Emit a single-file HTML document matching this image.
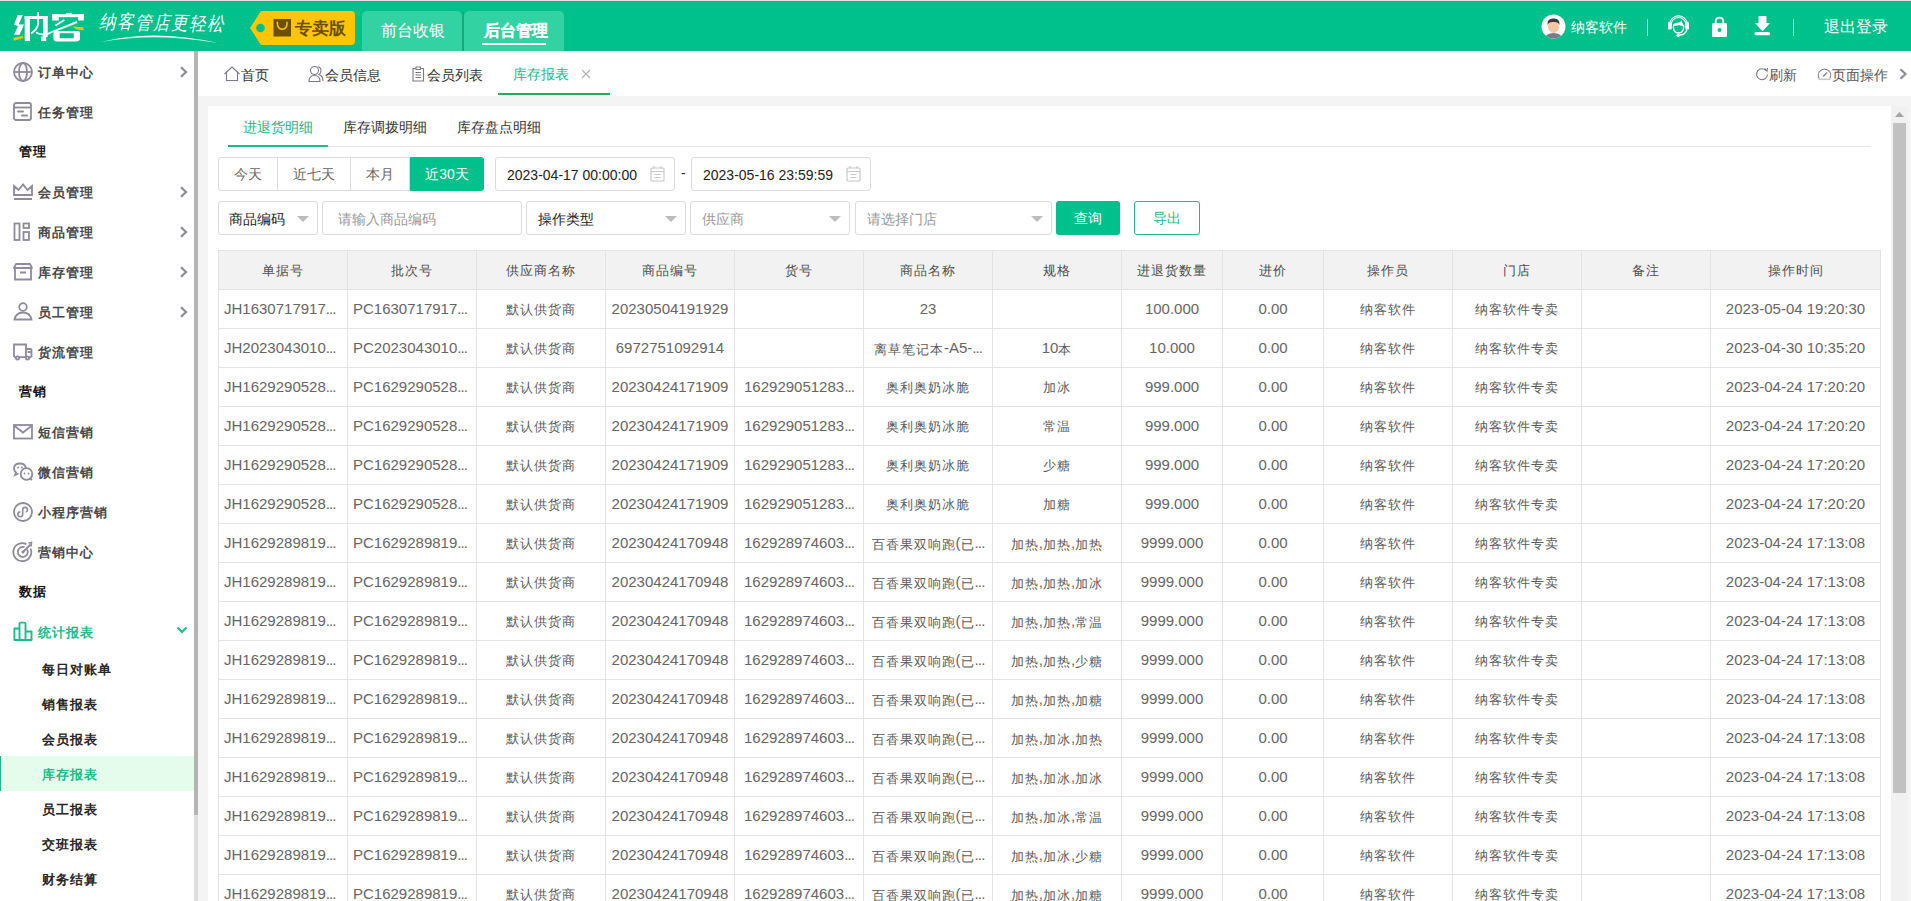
<!DOCTYPE html>
<html><head><meta charset="utf-8">
<style>
*{box-sizing:border-box;margin:0;padding:0}
html,body{width:1911px;height:901px;overflow:hidden;background:#f4f4f4;font-family:"Liberation Sans",sans-serif;font-size:14px;color:#333}
.abs{position:absolute}
#topline{position:absolute;left:0;top:0;width:1911px;height:1px;background:#e7dfe4}
#header{position:absolute;left:0;top:1px;width:1911px;height:50px;background:#00c18c}
.htab{position:absolute;top:10px;height:40px;background:#33d2a3;border-radius:5px 5px 0 0;color:#fff;font-size:16px;line-height:40px;text-align:center}
#side{position:absolute;left:0;top:51px;width:194px;height:850px;background:#fff;overflow:hidden}
.mi{position:absolute;left:0;width:194px;height:40px;font-weight:bold;color:#484848;font-size:13px;letter-spacing:1px}
.mi .t{position:absolute;left:38px;top:14px;line-height:16px}
.mi svg.ic{position:absolute;left:12px;top:10px}
.mi .arr{position:absolute;left:177px;top:15px}
.grp{position:absolute;left:19px;font-weight:bold;color:#111;font-size:13px;letter-spacing:1px;line-height:16px}
.sub{position:absolute;left:0;width:194px;height:35px;font-weight:bold;color:#262626;font-size:13px;letter-spacing:1px}
.sub .t{position:absolute;left:42px;top:11px;line-height:16px}
#sbtrack{position:absolute;left:194px;top:51px;width:4px;height:850px;background:#dedede}
#sbthumb{position:absolute;left:194px;top:51px;width:4px;height:764px;background:#b3b3b3}
#tabbar{position:absolute;left:198px;top:51px;width:1713px;height:45px;background:#fff}
.tb{position:absolute;top:16px;line-height:16px;color:#333;font-size:14px}
#card{position:absolute;left:208px;top:106px;width:1700px;height:795px;background:#fff;overflow:hidden}
#vtrack{position:absolute;left:1683px;top:0;width:17px;height:795px;background:#f1f1f1}
#vthumb{position:absolute;left:1685px;top:17px;width:13px;height:670px;background:#c1c1c1}
.btn{position:absolute;top:51px;height:34px;border:1px solid #dcdcdc;color:#666;text-align:center;line-height:32px;font-size:14px;background:#fff}
.inp{position:absolute;height:34px;border:1px solid #dcdcdc;border-radius:3px;background:#fff;font-size:14px;line-height:34px}
.tri{position:absolute;top:14px;width:0;height:0;border-left:6px solid transparent;border-right:6px solid transparent;border-top:6px solid #bdbdbd}
.thead{position:absolute;left:10px;width:1663px;height:39px;background:#f2f2f2}
.th{position:absolute;height:39px;line-height:41px;text-align:center;color:#4d4d4d;font-size:13px;letter-spacing:1px;text-indent:1px;white-space:nowrap;overflow:hidden}
.td{position:absolute;height:39px;line-height:41px;text-align:center;color:#5c5c5c;font-size:13px;letter-spacing:1px;text-indent:1px;white-space:nowrap;overflow:hidden}
.td.l{text-align:left;padding-left:6px;text-indent:0}
.n{font-size:15px;letter-spacing:0;color:#666;position:relative;top:-1px}
.dd{letter-spacing:-0.9px}
.vl{position:absolute;width:1px;background:#e3e3e3}
.hl{position:absolute;height:1px;background:#e3e3e3}
</style></head><body>
<div id="topline"></div>
<div id="header">
  <!-- logo -->
  <svg class="abs" style="left:0;top:-1px" width="100" height="50" viewBox="0 0 100 50">
    <g fill="#fff">
      <polygon points="17.6,15 22.8,15 18.8,24.2 24,24.5 19.6,34.7 14,34.7 18,26.3 14,24.8"/>
      <rect x="24.7" y="16" width="5.3" height="25.1"/>
      <rect x="24.7" y="16" width="23" height="3"/>
      <rect x="43" y="16" width="4.7" height="21"/>
      <rect x="41" y="36.5" width="5.2" height="4.6"/>
      <rect x="37.2" y="12" width="1.8" height="12"/>
      <path d="M38.5 23 Q37 30 31 33.5" stroke="#fff" stroke-width="1.8" fill="none"/>
      <rect x="66" y="13" width="5.6" height="3.2"/>
      <rect x="52.2" y="14.2" width="31.6" height="3"/>
      <rect x="52.2" y="14.2" width="6.6" height="6.3"/>
      <rect x="78.2" y="14.2" width="5.6" height="6.3"/>
      <path d="M55.5 25.5 L64.4 20" stroke="#fff" stroke-width="1.6" fill="none"/>
      <path d="M36 32.5 Q44 37 53 31.5 L77 22" stroke="#fff" stroke-width="1.9" fill="none"/>
      <path d="M53.5 33 Q53.5 31 56 31 L78 31 Q80 31 80 34 L80 38.5 Q80 41.5 76 41.5 L57 41.5 Q53.5 41.5 53.5 38.5 Z M59.7 33.3 L59.7 38.3 L73.8 38.3 L73.8 33.3 Z" fill-rule="evenodd"/>
    </g>
    <polygon fill="#ffc000" points="13.3,37.7 22.8,36.1 23.3,37.9 13.9,40.8"/>
    <polygon fill="#ffc000" points="72.1,26.6 83.2,27.2 83.8,30.2 76.6,29.4"/>
  </svg>
  <div class="abs" style="left:99px;top:10px;color:#fff;font-size:16.5px;letter-spacing:1px;font-style:italic;line-height:20px;transform:rotate(1.2deg) scaleY(1.15);transform-origin:0 50%">纳客管店更轻松</div>
  <svg class="abs" style="left:98px;top:32px" width="125" height="12" viewBox="0 0 125 12"><path d="M3 9 Q55 -4.5 120 10 Q55 -1.2 3 9 Z" fill="#fff" opacity="0.95"/></svg>
  <!-- badge -->
  <svg class="abs" style="left:249px;top:9px" width="107" height="36" viewBox="0 0 107 36">
    <path d="M12 1 L102 1 Q106 1 106 5 L106 31 Q106 35 102 35 L12 35 L1 18 Z" fill="#ffc500"/>
    <circle cx="11.5" cy="18" r="4.3" fill="#00c18c"/>
    <rect x="24.5" y="9" width="17.5" height="17.5" fill="#6b5000"/>
    <path d="M28.3 12.3 Q28.3 19.3 33.2 19.3 Q38.1 19.3 38.1 12.3" stroke="#ffc500" stroke-width="1.5" fill="none" stroke-linecap="round"/>
  </svg>
  <div class="abs" style="left:295px;top:18px;font-size:17px;font-weight:bold;color:#6b5000;line-height:20px;letter-spacing:0px">专卖版</div>
  <div class="htab" style="left:362px;width:100px;padding-left:2px">前台收银</div>
  <div class="abs" style="left:462px;top:11px;width:2px;height:40px;background:#17a97c"></div>
  <div class="htab" style="left:464px;width:100px;font-weight:bold;padding-left:3px;-webkit-text-stroke:0.15px #fff">后台管理</div>
  <div class="abs" style="left:482px;top:42px;width:64px;height:2px;background:#fff"></div>
  <!-- right -->
  <svg class="abs" style="left:1541px;top:13px" width="25" height="25" viewBox="0 0 25 25">
    <defs><clipPath id="cc"><circle cx="12.5" cy="12.5" r="12"/></clipPath></defs>
    <circle cx="12.5" cy="12.5" r="12" fill="#fff"/>
    <g clip-path="url(#cc)">
      <ellipse cx="12.5" cy="25.5" rx="9.5" ry="6.5" fill="#7a7a8a"/>
      <ellipse cx="12.5" cy="12.5" rx="5.5" ry="6.5" fill="#f4c7a1"/>
      <path d="M6.5 11 Q6 4 12.5 4.5 Q19 4 18.5 11 Q17 7.5 12.5 8 Q8 7.5 6.5 11Z" fill="#3b3b3b"/>
    </g>
  </svg>
  <div class="abs" style="left:1571px;top:18px;color:#fff;font-size:14px;line-height:16px">纳客软件</div>
  <div class="abs" style="left:1647px;top:18px;width:1px;height:17px;background:#b9ecd9"></div>
  <svg class="abs" style="left:1667px;top:12px" width="23" height="24" viewBox="0 0 23 24">
    <path d="M3.2 12 A8.3 8.3 0 0 1 19.8 12" stroke="#fff" stroke-width="2.8" fill="none"/>
    <path d="M3.2 12 A8.3 8.3 0 0 1 19.8 12" stroke="#00c18c" stroke-width="0.7" fill="none"/>
    <rect x="1" y="9" width="3.8" height="7.5" rx="1" fill="#fff"/>
    <rect x="18.2" y="9" width="3.8" height="7.5" rx="1" fill="#fff"/>
    <path d="M6.3 13.5 Q6.5 20 11.5 20 Q16.5 20 16.7 13.5" stroke="#fff" stroke-width="1.3" fill="none"/>
    <path d="M5.8 13.5 Q6 9.5 11 9.8 Q13 9.8 14.5 7.5 Q15 10.5 17.2 12.5 L17.2 14 Q14 11.8 11.5 12.3 Q8.5 12.5 5.8 14Z" fill="#fff"/>
    <path d="M20 15.5 Q19.5 21.5 12 22.3" stroke="#fff" stroke-width="1.4" fill="none"/>
    <circle cx="11.2" cy="22.3" r="1.7" fill="#fff"/>
  </svg>
  <svg class="abs" style="left:1711px;top:14px" width="17" height="23" viewBox="0 0 17 23">
    <path d="M4.7 9 V6.8 Q4.7 2.6 8.5 2.6 Q12.3 2.6 12.3 6.8 V9" stroke="#fff" stroke-width="1.9" fill="none"/>
    <rect x="1" y="8" width="15" height="14" rx="1.5" fill="#fff"/>
    <circle cx="8.5" cy="15" r="2" fill="#00c18c"/>
  </svg>
  <svg class="abs" style="left:1754px;top:14px" width="17" height="22" viewBox="0 0 17 22">
    <rect x="4.5" y="1" width="8" height="8" rx="1" fill="#fff"/>
    <path d="M1 8 H16 L8.5 16.5 Z" fill="#fff"/>
    <rect x="0.5" y="17" width="15.5" height="3.2" rx="1.5" fill="#fff"/>
  </svg>
  <div class="abs" style="left:1793px;top:18px;width:1px;height:17px;background:#b9ecd9"></div>
  <div class="abs" style="left:1824px;top:17px;color:#fff;font-size:16px;line-height:18px">退出登录</div>
</div>

<div id="side">
<div class="mi" style="top:0px"><span class="t">订单中心</span><svg class="ic" style="left:12px;top:10px" width="22" height="22" viewBox="0 0 22 22" ><circle cx="11" cy="11" r="9" stroke="#8f8b9b" stroke-width="1.8" fill="none"/><ellipse cx="11" cy="11" rx="4" ry="9" stroke="#8f8b9b" stroke-width="1.8" fill="none"/><path d="M2 11 H20" stroke="#8f8b9b" stroke-width="1.8" fill="none"/></svg><svg class="arr" style="left:179px;top:15px" width="10" height="12" viewBox="0 0 10 12"><path d="M2 1.2 L7 6 L2 10.8" stroke="#8f8b9b" stroke-width="2.2" fill="none"/></svg></div>
<div class="mi" style="top:40px"><span class="t">任务管理</span><svg class="ic" style="left:12px;top:10px" width="22" height="22" viewBox="0 0 22 22" ><rect x="2" y="2" width="17" height="17" rx="2" stroke="#8f8b9b" stroke-width="1.8" fill="none"/><path d="M2 6.5 H19" stroke="#8f8b9b" stroke-width="1.8" fill="none"/><path d="M6 10.5 H11" stroke="#8f8b9b" stroke-width="2" stroke-linecap="round"/><path d="M10 14.5 H15" stroke="#8f8b9b" stroke-width="2" stroke-linecap="round"/></svg></div>
<div class="grp" style="top:93px">管理</div>
<div class="mi" style="top:120px"><span class="t">会员管理</span><svg class="ic" style="left:12px;top:10px" width="22" height="22" viewBox="0 0 22 22" ><path d="M2 14 V5 L6.5 9 L11 3.5 L15.5 9 L20 5 V14 Z" stroke="#8f8b9b" stroke-width="1.8" fill="none" stroke-linejoin="miter"/><path d="M2 18 H20" stroke="#8f8b9b" stroke-width="2"/></svg><svg class="arr" style="left:179px;top:15px" width="10" height="12" viewBox="0 0 10 12"><path d="M2 1.2 L7 6 L2 10.8" stroke="#8f8b9b" stroke-width="2.2" fill="none"/></svg></div>
<div class="mi" style="top:160px"><span class="t">商品管理</span><svg class="ic" style="left:12px;top:10px" width="22" height="22" viewBox="0 0 22 22" ><rect x="2.5" y="2.5" width="5" height="16.5" stroke="#8f8b9b" stroke-width="1.8" fill="none"/><rect x="11.5" y="2.5" width="5.5" height="4.5" stroke="#8f8b9b" stroke-width="1.8" fill="none"/><rect x="11.5" y="11" width="5.5" height="8" stroke="#8f8b9b" stroke-width="1.8" fill="none"/></svg><svg class="arr" style="left:179px;top:15px" width="10" height="12" viewBox="0 0 10 12"><path d="M2 1.2 L7 6 L2 10.8" stroke="#8f8b9b" stroke-width="2.2" fill="none"/></svg></div>
<div class="mi" style="top:200px"><span class="t">库存管理</span><svg class="ic" style="left:12px;top:10px" width="22" height="22" viewBox="0 0 22 22" ><path d="M4 3 H18 L20 7 H2 Z" stroke="#8f8b9b" stroke-width="1.8" fill="none" stroke-linejoin="round"/><path d="M3 7 V18.5 H19 V7" stroke="#8f8b9b" stroke-width="1.8" fill="none"/><path d="M8 11.5 H14" stroke="#8f8b9b" stroke-width="2"/></svg><svg class="arr" style="left:179px;top:15px" width="10" height="12" viewBox="0 0 10 12"><path d="M2 1.2 L7 6 L2 10.8" stroke="#8f8b9b" stroke-width="2.2" fill="none"/></svg></div>
<div class="mi" style="top:240px"><span class="t">员工管理</span><svg class="ic" style="left:12px;top:10px" width="22" height="22" viewBox="0 0 22 22" ><circle cx="11" cy="6" r="3.8" stroke="#8f8b9b" stroke-width="1.8" fill="none"/><path d="M2.5 18.5 Q4 11.5 11 11.5 Q18 11.5 19.5 18.5 Z" stroke="#8f8b9b" stroke-width="1.8" fill="none"/></svg><svg class="arr" style="left:179px;top:15px" width="10" height="12" viewBox="0 0 10 12"><path d="M2 1.2 L7 6 L2 10.8" stroke="#8f8b9b" stroke-width="2.2" fill="none"/></svg></div>
<div class="mi" style="top:280px"><span class="t">货流管理</span><svg class="ic" style="left:12px;top:10px" width="22" height="22" viewBox="0 0 22 22" ><path d="M2 16 V3.5 H14 V16" stroke="#8f8b9b" stroke-width="1.8" fill="none"/><path d="M14 8 H18.5 Q19.5 8 19.5 9 V16" stroke="#8f8b9b" stroke-width="1.8" fill="none"/><path d="M2 16.2 H19.5" stroke="#8f8b9b" stroke-width="1.8" fill="none"/><circle cx="5.5" cy="17" r="1.6" fill="#fff" stroke="#8f8b9b" stroke-width="1.8" fill="none"/><circle cx="15.5" cy="17" r="1.6" fill="#fff" stroke="#8f8b9b" stroke-width="1.8" fill="none"/><path d="M15.5 11 H19" stroke="#8f8b9b" stroke-width="1.8" fill="none"/></svg></div>
<div class="grp" style="top:333px">营销</div>
<div class="mi" style="top:360px"><span class="t">短信营销</span><svg class="ic" style="left:12px;top:10px" width="22" height="22" viewBox="0 0 22 22" ><rect x="2" y="4" width="18" height="13.5" stroke="#8f8b9b" stroke-width="1.8" fill="none"/><path d="M2 4.5 L11 11.5 L20 4.5" stroke="#8f8b9b" stroke-width="1.8" fill="none"/></svg></div>
<div class="mi" style="top:400px"><span class="t">微信营销</span><svg class="ic" style="left:12px;top:10px" width="22" height="22" viewBox="0 0 22 22" ><path d="M14 7 Q13 2.5 8 2.5 Q2 2.5 2 7.5 Q2 10 4 11.5 L3 14 L6.5 12.5" stroke="#8f8b9b" stroke-width="1.8" fill="none"/><circle cx="14.5" cy="13" r="5.8" stroke="#8f8b9b" stroke-width="1.8" fill="none"/><path d="M18 17.5 L20 19" stroke="#8f8b9b" stroke-width="1.8" fill="none"/><circle cx="12.5" cy="12.5" r="0.9" fill="#8f8b9b"/><circle cx="16.5" cy="12.5" r="0.9" fill="#8f8b9b"/><circle cx="6" cy="6.5" r="0.9" fill="#8f8b9b"/><circle cx="10" cy="6.5" r="0.9" fill="#8f8b9b"/></svg></div>
<div class="mi" style="top:440px"><span class="t">小程序营销</span><svg class="ic" style="left:12px;top:10px" width="22" height="22" viewBox="0 0 22 22" ><circle cx="11" cy="11" r="9" stroke="#8f8b9b" stroke-width="1.8" fill="none"/><path d="M8.3 10.9 A2.4 2.4 0 1 0 10.7 13.3 L10.7 8.7 A2.4 2.4 0 1 1 13.7 11.1" stroke="#8f8b9b" stroke-width="1.6" fill="none"/></svg></div>
<div class="mi" style="top:480px"><span class="t">营销中心</span><svg class="ic" style="left:12px;top:10px" width="22" height="22" viewBox="0 0 22 22" ><path d="M18.5 7.5 A9 9 0 1 1 14.5 3.2" stroke="#8f8b9b" stroke-width="1.8" fill="none"/><path d="M15.2 8.5 A5 5 0 1 1 12.5 6.2" stroke="#8f8b9b" stroke-width="1.8" fill="none"/><circle cx="11" cy="11" r="1.5" fill="#8f8b9b"/><path d="M11 11 L18.5 3.5" stroke="#8f8b9b" stroke-width="1.8" fill="none"/><path d="M16.5 2 L19.5 1.5 L19 5.5" stroke="#8f8b9b" stroke-width="1.6" fill="none"/></svg></div>
<div class="grp" style="top:533px">数据</div>
<div class="mi" style="top:560px"><span class="t" style="color:#19bd8a">统计报表</span><svg class="ic" style="left:12px;top:10px" width="22" height="22" viewBox="0 0 22 22" ><path d="M2.4 19 V7.5 H7.5 V19 Z M7.5 19 V2.8 Q7.5 1.6 8.7 1.6 H12.3 Q13.5 1.6 13.5 2.8 V19 Z M13.5 19 V10.5 H19.5 V19 Z" stroke="#19bd8a" stroke-width="1.9" fill="none" stroke-linejoin="round"/></svg><svg class="arr" style="left:176px;top:14px" width="12" height="10" viewBox="0 0 12 10"><path d="M1.5 2.5 L6 7 L10.5 2.5" stroke="#19bd8a" stroke-width="2.2" fill="none"/></svg></div>
<div class="sub" style="top:600px"><span class="t">每日对账单</span></div>
<div class="sub" style="top:635px"><span class="t">销售报表</span></div>
<div class="sub" style="top:670px"><span class="t">会员报表</span></div>
<div class="sub" style="top:705px;background:#e5fcec"><div class="abs" style="left:0;top:0;width:1px;height:35px;background:#19bd8a"></div><span class="t" style="color:#19bd8a">库存报表</span></div>
<div class="sub" style="top:740px"><span class="t">员工报表</span></div>
<div class="sub" style="top:775px"><span class="t">交班报表</span></div>
<div class="sub" style="top:810px"><span class="t">财务结算</span></div>
</div>
<div id="sbtrack"></div><div id="sbthumb"></div>

<div id="tabbar">
<div class="abs" style="left:0;top:1px;width:1713px;height:1px;background:#f5f2f3"></div>

<svg class="abs" style="left:25px;top:15px" width="18" height="16" viewBox="0 0 18 16"><path d="M1.5 8 L9 1 L16.5 8 M3.5 6.5 V14.5 H14.5 V6.5" stroke="#7d7a88" stroke-width="1.1" fill="none"/></svg>
<div class="tb" style="left:43px">首页</div>
<svg class="abs" style="left:110px;top:14px" width="18" height="18" viewBox="0 0 18 18"><circle cx="6.5" cy="5.5" r="4" stroke="#7d7a88" stroke-width="1.1" fill="none"/><path d="M1 16.5 Q1 10.5 6.5 10.5 Q12 10.5 12 16.5 Z" stroke="#7d7a88" stroke-width="1.1" fill="none"/><path d="M9.5 1.8 Q13 2.2 13 5.5 Q13 8 11 9.5 Q15 11 15 16" stroke="#7d7a88" stroke-width="1.1" fill="none"/></svg>
<div class="tb" style="left:127px">会员信息</div>
<svg class="abs" style="left:213px;top:15px" width="15" height="16" viewBox="0 0 15 16"><path d="M2 2.5 H12.5 V15 H2 Z" stroke="#7d7a88" stroke-width="1.1" fill="none"/><rect x="5" y="1" width="4.5" height="2.5" fill="#fff" stroke="#7d7a88" stroke-width="1"/><path d="M4.5 6.5 H10 M4.5 9 H10 M4.5 11.5 H10" stroke="#7d7a88" stroke-width="1"/></svg>
<div class="tb" style="left:229px">会员列表</div>
<div class="tb" style="left:315px;top:15px;color:#1ab98a">库存报表</div>
<svg class="abs" style="left:383px;top:18px" width="10" height="10" viewBox="0 0 10 10"><path d="M1 1 L9 9 M9 1 L1 9" stroke="#b3b3b3" stroke-width="1.1"/></svg>
<div class="abs" style="left:300px;top:42px;width:112px;height:2px;background:#22ad65"></div>
<svg class="abs" style="left:1557px;top:16px" width="14" height="14" viewBox="0 0 14 14"><path d="M11.5 4 A5.5 5.5 0 1 0 12.5 7.5" stroke="#7d7a88" stroke-width="1.1" fill="none"/><path d="M9.5 1.5 L12 4 L12.5 0.8" stroke="#7d7a88" stroke-width="1.1" fill="none"/></svg>
<div class="tb" style="left:1571px;color:#555">刷新</div>
<svg class="abs" style="left:1619px;top:16px" width="15" height="14" viewBox="0 0 15 14"><path d="M2.2 11.5 A6.2 6.2 0 1 1 12.8 11.5" stroke="#7d7a88" stroke-width="1.1" fill="none"/><path d="M6.2 9.5 L10 5.5" stroke="#7d7a88" stroke-width="1.1"/><path d="M1.5 12.3 H13.5" stroke="#c8c8c8" stroke-width="1.6"/></svg>
<div class="tb" style="left:1634px;color:#555">页面操作</div>
<svg class="abs" style="left:1701px;top:17px" width="10" height="12" viewBox="0 0 10 12"><path d="M1.5 1.2 L6.5 6 L1.5 10.8" stroke="#8f8b9b" stroke-width="2.2" fill="none"/></svg>

</div>

<div id="card">

<div class="abs" style="left:35px;top:13px;color:#1ab98a;line-height:16px">进退货明细</div>
<div class="abs" style="left:135px;top:13px;color:#333;line-height:16px">库存调拨明细</div>
<div class="abs" style="left:249px;top:13px;color:#333;line-height:16px">库存盘点明细</div>
<div class="abs" style="left:20px;top:40px;width:1643px;height:1px;background:#e4e4e4"></div>
<div class="abs" style="left:20px;top:39px;width:100px;height:2px;background:#19bd8a"></div>

<div class="btn" style="left:10px;width:60px;border-radius:3px 0 0 3px">今天</div>
<div class="btn" style="left:69px;width:74px">近七天</div>
<div class="btn" style="left:142px;width:60px">本月</div>
<div class="btn" style="left:202px;width:74px;background:#00c18c;border-color:#00c18c;color:#fff;border-radius:0 3px 3px 0">近30天</div>

<div class="inp" style="left:287px;top:51px;width:180px;color:#222;padding-left:11px">2023-04-17 00:00:00<svg class="abs" style="left:154px;top:7px" width="15" height="17" viewBox="0 0 15 17"><rect x="1" y="3" width="13" height="13" rx="1" stroke="#c8c8c8" stroke-width="1.2" fill="none"/><path d="M1 6.5 H14 M4 1 V3.5 M11 1 V3.5 M4.5 9.5 H10.5 M4.5 12.5 H10.5" stroke="#c8c8c8" stroke-width="1.2"/></svg></div>
<div class="abs" style="left:473px;top:59px;color:#333;line-height:16px">-</div>
<div class="inp" style="left:483px;top:51px;width:180px;color:#222;padding-left:11px">2023-05-16 23:59:59<svg class="abs" style="left:154px;top:7px" width="15" height="17" viewBox="0 0 15 17"><rect x="1" y="3" width="13" height="13" rx="1" stroke="#c8c8c8" stroke-width="1.2" fill="none"/><path d="M1 6.5 H14 M4 1 V3.5 M11 1 V3.5 M4.5 9.5 H10.5 M4.5 12.5 H10.5" stroke="#c8c8c8" stroke-width="1.2"/></svg></div>

<div class="inp" style="left:10px;top:95px;width:100px;color:#222;padding-left:10px">商品编码<div class="tri" style="left:78px"></div></div>
<div class="inp" style="left:114px;top:95px;width:200px;color:#999;padding-left:15px">请输入商品编码</div>
<div class="inp" style="left:318px;top:95px;width:160px;color:#222;padding-left:11px">操作类型<div class="tri" style="left:138px"></div></div>
<div class="inp" style="left:482px;top:95px;width:160px;color:#999;padding-left:11px">供应商<div class="tri" style="left:138px"></div></div>
<div class="inp" style="left:647px;top:95px;width:197px;color:#999;padding-left:11px">请选择门店<div class="tri" style="left:175px"></div></div>
<div class="abs" style="left:848px;top:95px;width:64px;height:34px;background:#00c18c;border-radius:3px;color:#fff;text-align:center;line-height:34px">查询</div>
<div class="abs" style="left:926px;top:95px;width:66px;height:34px;border:1px solid #19bd8a;border-radius:3px;color:#19bd8a;text-align:center;line-height:32px">导出</div>

<div class="thead" style="top:144px"></div>
<div class="th" style="left:10px;width:129px;top:144px">单据号</div>
<div class="th" style="left:139px;width:129px;top:144px">批次号</div>
<div class="th" style="left:268px;width:129px;top:144px">供应商名称</div>
<div class="th" style="left:397px;width:129px;top:144px">商品编号</div>
<div class="th" style="left:526px;width:129px;top:144px">货号</div>
<div class="th" style="left:655px;width:129px;top:144px">商品名称</div>
<div class="th" style="left:784px;width:129px;top:144px">规格</div>
<div class="th" style="left:913px;width:101px;top:144px">进退货数量</div>
<div class="th" style="left:1014px;width:101px;top:144px">进价</div>
<div class="th" style="left:1115px;width:129px;top:144px">操作员</div>
<div class="th" style="left:1244px;width:129px;top:144px">门店</div>
<div class="th" style="left:1373px;width:129px;top:144px">备注</div>
<div class="th" style="left:1502px;width:170px;top:144px">操作时间</div>
<div class="td l" style="left:10px;width:129px;top:183px"><span class="n">JH1630717917<span class="dd">...</span></span></div>
<div class="td l" style="left:139px;width:129px;top:183px"><span class="n">PC1630717917<span class="dd">...</span></span></div>
<div class="td" style="left:268px;width:129px;top:183px">默认供货商</div>
<div class="td" style="left:397px;width:129px;top:183px"><span class="n">20230504191929</span></div>
<div class="td" style="left:526px;width:129px;top:183px"></div>
<div class="td" style="left:655px;width:129px;top:183px"><span class="n">23</span></div>
<div class="td" style="left:784px;width:129px;top:183px"></div>
<div class="td" style="left:913px;width:101px;top:183px"><span class="n">100.000</span></div>
<div class="td" style="left:1014px;width:101px;top:183px"><span class="n">0.00</span></div>
<div class="td" style="left:1115px;width:129px;top:183px">纳客软件</div>
<div class="td" style="left:1244px;width:129px;top:183px">纳客软件专卖</div>
<div class="td" style="left:1373px;width:129px;top:183px"></div>
<div class="td" style="left:1502px;width:170px;top:183px"><span class="n">2023-05-04 19:20:30</span></div>
<div class="td l" style="left:10px;width:129px;top:222px"><span class="n">JH2023043010<span class="dd">...</span></span></div>
<div class="td l" style="left:139px;width:129px;top:222px"><span class="n">PC2023043010<span class="dd">...</span></span></div>
<div class="td" style="left:268px;width:129px;top:222px">默认供货商</div>
<div class="td" style="left:397px;width:129px;top:222px"><span class="n">6972751092914</span></div>
<div class="td" style="left:526px;width:129px;top:222px"></div>
<div class="td" style="left:655px;width:129px;top:222px">离草笔记本<span class="n">-A5-<span class="dd">...</span></span></div>
<div class="td" style="left:784px;width:129px;top:222px"><span class="n">10</span>本</div>
<div class="td" style="left:913px;width:101px;top:222px"><span class="n">10.000</span></div>
<div class="td" style="left:1014px;width:101px;top:222px"><span class="n">0.00</span></div>
<div class="td" style="left:1115px;width:129px;top:222px">纳客软件</div>
<div class="td" style="left:1244px;width:129px;top:222px">纳客软件专卖</div>
<div class="td" style="left:1373px;width:129px;top:222px"></div>
<div class="td" style="left:1502px;width:170px;top:222px"><span class="n">2023-04-30 10:35:20</span></div>
<div class="td l" style="left:10px;width:129px;top:261px"><span class="n">JH1629290528<span class="dd">...</span></span></div>
<div class="td l" style="left:139px;width:129px;top:261px"><span class="n">PC1629290528<span class="dd">...</span></span></div>
<div class="td" style="left:268px;width:129px;top:261px">默认供货商</div>
<div class="td" style="left:397px;width:129px;top:261px"><span class="n">20230424171909</span></div>
<div class="td" style="left:526px;width:129px;top:261px"><span class="n">162929051283<span class="dd">...</span></span></div>
<div class="td" style="left:655px;width:129px;top:261px">奥利奥奶冰脆</div>
<div class="td" style="left:784px;width:129px;top:261px">加冰</div>
<div class="td" style="left:913px;width:101px;top:261px"><span class="n">999.000</span></div>
<div class="td" style="left:1014px;width:101px;top:261px"><span class="n">0.00</span></div>
<div class="td" style="left:1115px;width:129px;top:261px">纳客软件</div>
<div class="td" style="left:1244px;width:129px;top:261px">纳客软件专卖</div>
<div class="td" style="left:1373px;width:129px;top:261px"></div>
<div class="td" style="left:1502px;width:170px;top:261px"><span class="n">2023-04-24 17:20:20</span></div>
<div class="td l" style="left:10px;width:129px;top:300px"><span class="n">JH1629290528<span class="dd">...</span></span></div>
<div class="td l" style="left:139px;width:129px;top:300px"><span class="n">PC1629290528<span class="dd">...</span></span></div>
<div class="td" style="left:268px;width:129px;top:300px">默认供货商</div>
<div class="td" style="left:397px;width:129px;top:300px"><span class="n">20230424171909</span></div>
<div class="td" style="left:526px;width:129px;top:300px"><span class="n">162929051283<span class="dd">...</span></span></div>
<div class="td" style="left:655px;width:129px;top:300px">奥利奥奶冰脆</div>
<div class="td" style="left:784px;width:129px;top:300px">常温</div>
<div class="td" style="left:913px;width:101px;top:300px"><span class="n">999.000</span></div>
<div class="td" style="left:1014px;width:101px;top:300px"><span class="n">0.00</span></div>
<div class="td" style="left:1115px;width:129px;top:300px">纳客软件</div>
<div class="td" style="left:1244px;width:129px;top:300px">纳客软件专卖</div>
<div class="td" style="left:1373px;width:129px;top:300px"></div>
<div class="td" style="left:1502px;width:170px;top:300px"><span class="n">2023-04-24 17:20:20</span></div>
<div class="td l" style="left:10px;width:129px;top:339px"><span class="n">JH1629290528<span class="dd">...</span></span></div>
<div class="td l" style="left:139px;width:129px;top:339px"><span class="n">PC1629290528<span class="dd">...</span></span></div>
<div class="td" style="left:268px;width:129px;top:339px">默认供货商</div>
<div class="td" style="left:397px;width:129px;top:339px"><span class="n">20230424171909</span></div>
<div class="td" style="left:526px;width:129px;top:339px"><span class="n">162929051283<span class="dd">...</span></span></div>
<div class="td" style="left:655px;width:129px;top:339px">奥利奥奶冰脆</div>
<div class="td" style="left:784px;width:129px;top:339px">少糖</div>
<div class="td" style="left:913px;width:101px;top:339px"><span class="n">999.000</span></div>
<div class="td" style="left:1014px;width:101px;top:339px"><span class="n">0.00</span></div>
<div class="td" style="left:1115px;width:129px;top:339px">纳客软件</div>
<div class="td" style="left:1244px;width:129px;top:339px">纳客软件专卖</div>
<div class="td" style="left:1373px;width:129px;top:339px"></div>
<div class="td" style="left:1502px;width:170px;top:339px"><span class="n">2023-04-24 17:20:20</span></div>
<div class="td l" style="left:10px;width:129px;top:378px"><span class="n">JH1629290528<span class="dd">...</span></span></div>
<div class="td l" style="left:139px;width:129px;top:378px"><span class="n">PC1629290528<span class="dd">...</span></span></div>
<div class="td" style="left:268px;width:129px;top:378px">默认供货商</div>
<div class="td" style="left:397px;width:129px;top:378px"><span class="n">20230424171909</span></div>
<div class="td" style="left:526px;width:129px;top:378px"><span class="n">162929051283<span class="dd">...</span></span></div>
<div class="td" style="left:655px;width:129px;top:378px">奥利奥奶冰脆</div>
<div class="td" style="left:784px;width:129px;top:378px">加糖</div>
<div class="td" style="left:913px;width:101px;top:378px"><span class="n">999.000</span></div>
<div class="td" style="left:1014px;width:101px;top:378px"><span class="n">0.00</span></div>
<div class="td" style="left:1115px;width:129px;top:378px">纳客软件</div>
<div class="td" style="left:1244px;width:129px;top:378px">纳客软件专卖</div>
<div class="td" style="left:1373px;width:129px;top:378px"></div>
<div class="td" style="left:1502px;width:170px;top:378px"><span class="n">2023-04-24 17:20:20</span></div>
<div class="td l" style="left:10px;width:129px;top:417px"><span class="n">JH1629289819<span class="dd">...</span></span></div>
<div class="td l" style="left:139px;width:129px;top:417px"><span class="n">PC1629289819<span class="dd">...</span></span></div>
<div class="td" style="left:268px;width:129px;top:417px">默认供货商</div>
<div class="td" style="left:397px;width:129px;top:417px"><span class="n">20230424170948</span></div>
<div class="td" style="left:526px;width:129px;top:417px"><span class="n">162928974603<span class="dd">...</span></span></div>
<div class="td" style="left:655px;width:129px;top:417px">百香果双响跑<span class="n">(</span>已<span class="n"><span class="dd">...</span></span></div>
<div class="td" style="left:784px;width:129px;top:417px">加热<span class="n">,</span>加热<span class="n">,</span>加热</div>
<div class="td" style="left:913px;width:101px;top:417px"><span class="n">9999.000</span></div>
<div class="td" style="left:1014px;width:101px;top:417px"><span class="n">0.00</span></div>
<div class="td" style="left:1115px;width:129px;top:417px">纳客软件</div>
<div class="td" style="left:1244px;width:129px;top:417px">纳客软件专卖</div>
<div class="td" style="left:1373px;width:129px;top:417px"></div>
<div class="td" style="left:1502px;width:170px;top:417px"><span class="n">2023-04-24 17:13:08</span></div>
<div class="td l" style="left:10px;width:129px;top:456px"><span class="n">JH1629289819<span class="dd">...</span></span></div>
<div class="td l" style="left:139px;width:129px;top:456px"><span class="n">PC1629289819<span class="dd">...</span></span></div>
<div class="td" style="left:268px;width:129px;top:456px">默认供货商</div>
<div class="td" style="left:397px;width:129px;top:456px"><span class="n">20230424170948</span></div>
<div class="td" style="left:526px;width:129px;top:456px"><span class="n">162928974603<span class="dd">...</span></span></div>
<div class="td" style="left:655px;width:129px;top:456px">百香果双响跑<span class="n">(</span>已<span class="n"><span class="dd">...</span></span></div>
<div class="td" style="left:784px;width:129px;top:456px">加热<span class="n">,</span>加热<span class="n">,</span>加冰</div>
<div class="td" style="left:913px;width:101px;top:456px"><span class="n">9999.000</span></div>
<div class="td" style="left:1014px;width:101px;top:456px"><span class="n">0.00</span></div>
<div class="td" style="left:1115px;width:129px;top:456px">纳客软件</div>
<div class="td" style="left:1244px;width:129px;top:456px">纳客软件专卖</div>
<div class="td" style="left:1373px;width:129px;top:456px"></div>
<div class="td" style="left:1502px;width:170px;top:456px"><span class="n">2023-04-24 17:13:08</span></div>
<div class="td l" style="left:10px;width:129px;top:495px"><span class="n">JH1629289819<span class="dd">...</span></span></div>
<div class="td l" style="left:139px;width:129px;top:495px"><span class="n">PC1629289819<span class="dd">...</span></span></div>
<div class="td" style="left:268px;width:129px;top:495px">默认供货商</div>
<div class="td" style="left:397px;width:129px;top:495px"><span class="n">20230424170948</span></div>
<div class="td" style="left:526px;width:129px;top:495px"><span class="n">162928974603<span class="dd">...</span></span></div>
<div class="td" style="left:655px;width:129px;top:495px">百香果双响跑<span class="n">(</span>已<span class="n"><span class="dd">...</span></span></div>
<div class="td" style="left:784px;width:129px;top:495px">加热<span class="n">,</span>加热<span class="n">,</span>常温</div>
<div class="td" style="left:913px;width:101px;top:495px"><span class="n">9999.000</span></div>
<div class="td" style="left:1014px;width:101px;top:495px"><span class="n">0.00</span></div>
<div class="td" style="left:1115px;width:129px;top:495px">纳客软件</div>
<div class="td" style="left:1244px;width:129px;top:495px">纳客软件专卖</div>
<div class="td" style="left:1373px;width:129px;top:495px"></div>
<div class="td" style="left:1502px;width:170px;top:495px"><span class="n">2023-04-24 17:13:08</span></div>
<div class="td l" style="left:10px;width:129px;top:534px"><span class="n">JH1629289819<span class="dd">...</span></span></div>
<div class="td l" style="left:139px;width:129px;top:534px"><span class="n">PC1629289819<span class="dd">...</span></span></div>
<div class="td" style="left:268px;width:129px;top:534px">默认供货商</div>
<div class="td" style="left:397px;width:129px;top:534px"><span class="n">20230424170948</span></div>
<div class="td" style="left:526px;width:129px;top:534px"><span class="n">162928974603<span class="dd">...</span></span></div>
<div class="td" style="left:655px;width:129px;top:534px">百香果双响跑<span class="n">(</span>已<span class="n"><span class="dd">...</span></span></div>
<div class="td" style="left:784px;width:129px;top:534px">加热<span class="n">,</span>加热<span class="n">,</span>少糖</div>
<div class="td" style="left:913px;width:101px;top:534px"><span class="n">9999.000</span></div>
<div class="td" style="left:1014px;width:101px;top:534px"><span class="n">0.00</span></div>
<div class="td" style="left:1115px;width:129px;top:534px">纳客软件</div>
<div class="td" style="left:1244px;width:129px;top:534px">纳客软件专卖</div>
<div class="td" style="left:1373px;width:129px;top:534px"></div>
<div class="td" style="left:1502px;width:170px;top:534px"><span class="n">2023-04-24 17:13:08</span></div>
<div class="td l" style="left:10px;width:129px;top:573px"><span class="n">JH1629289819<span class="dd">...</span></span></div>
<div class="td l" style="left:139px;width:129px;top:573px"><span class="n">PC1629289819<span class="dd">...</span></span></div>
<div class="td" style="left:268px;width:129px;top:573px">默认供货商</div>
<div class="td" style="left:397px;width:129px;top:573px"><span class="n">20230424170948</span></div>
<div class="td" style="left:526px;width:129px;top:573px"><span class="n">162928974603<span class="dd">...</span></span></div>
<div class="td" style="left:655px;width:129px;top:573px">百香果双响跑<span class="n">(</span>已<span class="n"><span class="dd">...</span></span></div>
<div class="td" style="left:784px;width:129px;top:573px">加热<span class="n">,</span>加热<span class="n">,</span>加糖</div>
<div class="td" style="left:913px;width:101px;top:573px"><span class="n">9999.000</span></div>
<div class="td" style="left:1014px;width:101px;top:573px"><span class="n">0.00</span></div>
<div class="td" style="left:1115px;width:129px;top:573px">纳客软件</div>
<div class="td" style="left:1244px;width:129px;top:573px">纳客软件专卖</div>
<div class="td" style="left:1373px;width:129px;top:573px"></div>
<div class="td" style="left:1502px;width:170px;top:573px"><span class="n">2023-04-24 17:13:08</span></div>
<div class="td l" style="left:10px;width:129px;top:612px"><span class="n">JH1629289819<span class="dd">...</span></span></div>
<div class="td l" style="left:139px;width:129px;top:612px"><span class="n">PC1629289819<span class="dd">...</span></span></div>
<div class="td" style="left:268px;width:129px;top:612px">默认供货商</div>
<div class="td" style="left:397px;width:129px;top:612px"><span class="n">20230424170948</span></div>
<div class="td" style="left:526px;width:129px;top:612px"><span class="n">162928974603<span class="dd">...</span></span></div>
<div class="td" style="left:655px;width:129px;top:612px">百香果双响跑<span class="n">(</span>已<span class="n"><span class="dd">...</span></span></div>
<div class="td" style="left:784px;width:129px;top:612px">加热<span class="n">,</span>加冰<span class="n">,</span>加热</div>
<div class="td" style="left:913px;width:101px;top:612px"><span class="n">9999.000</span></div>
<div class="td" style="left:1014px;width:101px;top:612px"><span class="n">0.00</span></div>
<div class="td" style="left:1115px;width:129px;top:612px">纳客软件</div>
<div class="td" style="left:1244px;width:129px;top:612px">纳客软件专卖</div>
<div class="td" style="left:1373px;width:129px;top:612px"></div>
<div class="td" style="left:1502px;width:170px;top:612px"><span class="n">2023-04-24 17:13:08</span></div>
<div class="td l" style="left:10px;width:129px;top:651px"><span class="n">JH1629289819<span class="dd">...</span></span></div>
<div class="td l" style="left:139px;width:129px;top:651px"><span class="n">PC1629289819<span class="dd">...</span></span></div>
<div class="td" style="left:268px;width:129px;top:651px">默认供货商</div>
<div class="td" style="left:397px;width:129px;top:651px"><span class="n">20230424170948</span></div>
<div class="td" style="left:526px;width:129px;top:651px"><span class="n">162928974603<span class="dd">...</span></span></div>
<div class="td" style="left:655px;width:129px;top:651px">百香果双响跑<span class="n">(</span>已<span class="n"><span class="dd">...</span></span></div>
<div class="td" style="left:784px;width:129px;top:651px">加热<span class="n">,</span>加冰<span class="n">,</span>加冰</div>
<div class="td" style="left:913px;width:101px;top:651px"><span class="n">9999.000</span></div>
<div class="td" style="left:1014px;width:101px;top:651px"><span class="n">0.00</span></div>
<div class="td" style="left:1115px;width:129px;top:651px">纳客软件</div>
<div class="td" style="left:1244px;width:129px;top:651px">纳客软件专卖</div>
<div class="td" style="left:1373px;width:129px;top:651px"></div>
<div class="td" style="left:1502px;width:170px;top:651px"><span class="n">2023-04-24 17:13:08</span></div>
<div class="td l" style="left:10px;width:129px;top:690px"><span class="n">JH1629289819<span class="dd">...</span></span></div>
<div class="td l" style="left:139px;width:129px;top:690px"><span class="n">PC1629289819<span class="dd">...</span></span></div>
<div class="td" style="left:268px;width:129px;top:690px">默认供货商</div>
<div class="td" style="left:397px;width:129px;top:690px"><span class="n">20230424170948</span></div>
<div class="td" style="left:526px;width:129px;top:690px"><span class="n">162928974603<span class="dd">...</span></span></div>
<div class="td" style="left:655px;width:129px;top:690px">百香果双响跑<span class="n">(</span>已<span class="n"><span class="dd">...</span></span></div>
<div class="td" style="left:784px;width:129px;top:690px">加热<span class="n">,</span>加冰<span class="n">,</span>常温</div>
<div class="td" style="left:913px;width:101px;top:690px"><span class="n">9999.000</span></div>
<div class="td" style="left:1014px;width:101px;top:690px"><span class="n">0.00</span></div>
<div class="td" style="left:1115px;width:129px;top:690px">纳客软件</div>
<div class="td" style="left:1244px;width:129px;top:690px">纳客软件专卖</div>
<div class="td" style="left:1373px;width:129px;top:690px"></div>
<div class="td" style="left:1502px;width:170px;top:690px"><span class="n">2023-04-24 17:13:08</span></div>
<div class="td l" style="left:10px;width:129px;top:729px"><span class="n">JH1629289819<span class="dd">...</span></span></div>
<div class="td l" style="left:139px;width:129px;top:729px"><span class="n">PC1629289819<span class="dd">...</span></span></div>
<div class="td" style="left:268px;width:129px;top:729px">默认供货商</div>
<div class="td" style="left:397px;width:129px;top:729px"><span class="n">20230424170948</span></div>
<div class="td" style="left:526px;width:129px;top:729px"><span class="n">162928974603<span class="dd">...</span></span></div>
<div class="td" style="left:655px;width:129px;top:729px">百香果双响跑<span class="n">(</span>已<span class="n"><span class="dd">...</span></span></div>
<div class="td" style="left:784px;width:129px;top:729px">加热<span class="n">,</span>加冰<span class="n">,</span>少糖</div>
<div class="td" style="left:913px;width:101px;top:729px"><span class="n">9999.000</span></div>
<div class="td" style="left:1014px;width:101px;top:729px"><span class="n">0.00</span></div>
<div class="td" style="left:1115px;width:129px;top:729px">纳客软件</div>
<div class="td" style="left:1244px;width:129px;top:729px">纳客软件专卖</div>
<div class="td" style="left:1373px;width:129px;top:729px"></div>
<div class="td" style="left:1502px;width:170px;top:729px"><span class="n">2023-04-24 17:13:08</span></div>
<div class="td l" style="left:10px;width:129px;top:768px"><span class="n">JH1629289819<span class="dd">...</span></span></div>
<div class="td l" style="left:139px;width:129px;top:768px"><span class="n">PC1629289819<span class="dd">...</span></span></div>
<div class="td" style="left:268px;width:129px;top:768px">默认供货商</div>
<div class="td" style="left:397px;width:129px;top:768px"><span class="n">20230424170948</span></div>
<div class="td" style="left:526px;width:129px;top:768px"><span class="n">162928974603<span class="dd">...</span></span></div>
<div class="td" style="left:655px;width:129px;top:768px">百香果双响跑<span class="n">(</span>已<span class="n"><span class="dd">...</span></span></div>
<div class="td" style="left:784px;width:129px;top:768px">加热<span class="n">,</span>加冰<span class="n">,</span>加糖</div>
<div class="td" style="left:913px;width:101px;top:768px"><span class="n">9999.000</span></div>
<div class="td" style="left:1014px;width:101px;top:768px"><span class="n">0.00</span></div>
<div class="td" style="left:1115px;width:129px;top:768px">纳客软件</div>
<div class="td" style="left:1244px;width:129px;top:768px">纳客软件专卖</div>
<div class="td" style="left:1373px;width:129px;top:768px"></div>
<div class="td" style="left:1502px;width:170px;top:768px"><span class="n">2023-04-24 17:13:08</span></div>
<div class="vl" style="left:10px;top:144px;height:663px"></div>
<div class="vl" style="left:139px;top:144px;height:663px"></div>
<div class="vl" style="left:268px;top:144px;height:663px"></div>
<div class="vl" style="left:397px;top:144px;height:663px"></div>
<div class="vl" style="left:526px;top:144px;height:663px"></div>
<div class="vl" style="left:655px;top:144px;height:663px"></div>
<div class="vl" style="left:784px;top:144px;height:663px"></div>
<div class="vl" style="left:913px;top:144px;height:663px"></div>
<div class="vl" style="left:1014px;top:144px;height:663px"></div>
<div class="vl" style="left:1115px;top:144px;height:663px"></div>
<div class="vl" style="left:1244px;top:144px;height:663px"></div>
<div class="vl" style="left:1373px;top:144px;height:663px"></div>
<div class="vl" style="left:1502px;top:144px;height:663px"></div>
<div class="vl" style="left:1672px;top:144px;height:663px"></div>
<div class="hl" style="left:10px;top:144px;width:1663px"></div>
<div class="hl" style="left:10px;top:183px;width:1663px"></div>
<div class="hl" style="left:10px;top:222px;width:1663px"></div>
<div class="hl" style="left:10px;top:261px;width:1663px"></div>
<div class="hl" style="left:10px;top:300px;width:1663px"></div>
<div class="hl" style="left:10px;top:339px;width:1663px"></div>
<div class="hl" style="left:10px;top:378px;width:1663px"></div>
<div class="hl" style="left:10px;top:417px;width:1663px"></div>
<div class="hl" style="left:10px;top:456px;width:1663px"></div>
<div class="hl" style="left:10px;top:495px;width:1663px"></div>
<div class="hl" style="left:10px;top:534px;width:1663px"></div>
<div class="hl" style="left:10px;top:573px;width:1663px"></div>
<div class="hl" style="left:10px;top:612px;width:1663px"></div>
<div class="hl" style="left:10px;top:651px;width:1663px"></div>
<div class="hl" style="left:10px;top:690px;width:1663px"></div>
<div class="hl" style="left:10px;top:729px;width:1663px"></div>
<div class="hl" style="left:10px;top:768px;width:1663px"></div>
<div class="hl" style="left:10px;top:807px;width:1663px"></div>
<div id="vtrack"></div>
<svg class="abs" style="left:1686px;top:5px" width="11" height="7" viewBox="0 0 11 7"><path d="M1 6 L5.5 1 L10 6Z" fill="#a3a3a3"/></svg>
<div id="vthumb"></div>
</div>
</body></html>
